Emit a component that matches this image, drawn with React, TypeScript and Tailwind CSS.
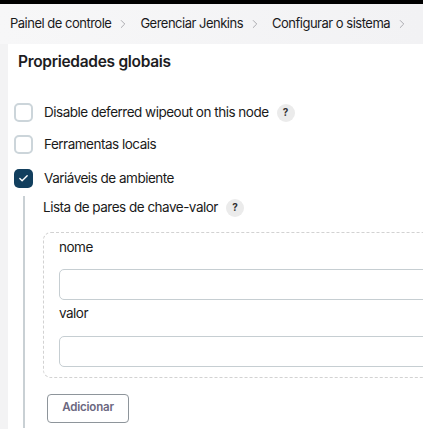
import { Check, ChevronRight } from "lucide-react";

function Help() {
  return (
    <span className="ml-[8px] inline-flex h-[18px] w-[18px] items-center justify-center rounded-full bg-[#ebebeb] text-[10px] font-bold text-[#333]">
      ?
    </span>
  );
}

function CheckRow({ label, checked, help }: { label: string; checked?: boolean; help?: boolean }) {
  return (
    <div className="flex h-[19px] items-center">
      {checked ? (
        <span className="flex h-[19px] w-[19px] items-center justify-center rounded-[5px] bg-[#123f5e]">
          <Check size={11} strokeWidth={3} className="text-white" />
        </span>
      ) : (
        <span className="h-[19px] w-[19px] rounded-[5px] border-2 border-[#ccd5da] bg-white" />
      )}
      <span className="ml-[11px] text-[13.5px] leading-[19px] tracking-[-0.5px] text-[#1a1a1a]">{label}</span>
      {help && <Help />}
    </div>
  );
}

export default function App() {
  const crumbs = ["Painel de controle", "Gerenciar Jenkins", "Configurar o sistema"];
  return (
    <div className="flex h-[429px] w-[423px] flex-col overflow-hidden bg-[#f3f3f4] font-['Inter',sans-serif]">
      <div className="h-1 shrink-0 bg-black" />
      <nav className="flex h-10 shrink-0 items-center bg-gradient-to-r from-[#f7f7f8] to-[#f2f2f4] pl-[10px] text-[13px] tracking-[-0.5px] text-[#1a1a1c]">
        {crumbs.map((c) => (
          <span key={c} className="flex items-center">
            <span className="whitespace-nowrap">{c}</span>
            <ChevronRight size={14} strokeWidth={1.6} className="ml-[5px] mr-[10px] shrink-0 text-[#a6a6ab]" />
          </span>
        ))}
      </nav>
      <main className="ml-2 flex-1 bg-white pl-[6px] pt-[7px]">
        <h2 className="pl-[4px] text-[15.5px] font-semibold leading-[22px] tracking-[-0.3px] text-[#1d1d1f]">Propriedades globais</h2>
        <div className="mt-[30px] flex flex-col">
          <CheckRow label="Disable deferred wipeout on this node" help />
          <div className="mt-[13px]">
            <CheckRow label="Ferramentas locais" />
          </div>
          <div className="mt-[15px]">
            <CheckRow label="Variáveis de ambiente" checked />
          </div>
        </div>
        <div className="ml-[9px] mt-[8px] w-[500px] border-l-2 border-[#c9d0d4] pb-[5px] pl-[18px]">
          <div className="flex items-center pt-[2px] text-[13.5px] leading-[19.5px] tracking-[-0.5px] text-[#1a1a1a]">
            Lista de pares de chave-valor
            <Help />
          </div>
          <div className="mt-[14px] rounded-lg border border-dashed border-[#d2d2d2] px-[15px] pb-[10px] pt-[5px]">
            <div className="text-[13.5px] leading-[19.5px] tracking-[-0.5px] text-[#1a1a1a]">nome</div>
            <div className="mt-[12px] h-[31px] rounded-[5px] border border-[#c6ced2] bg-white" />
            <div className="mt-[4px] text-[13.5px] leading-[19.5px] tracking-[-0.5px] text-[#1a1a1a]">valor</div>
            <div className="mt-[12px] h-[31px] rounded-[5px] border border-[#c6ced2] bg-white" />
          </div>
          <button className="ml-[4px] mt-[16px] h-[29px] w-[82px] rounded-[4px] border border-[#8e959b] bg-white text-[11.5px] font-semibold tracking-[-0.2px] text-[#6b6780]">
            Adicionar
          </button>
        </div>
      </main>
    </div>
  );
}
